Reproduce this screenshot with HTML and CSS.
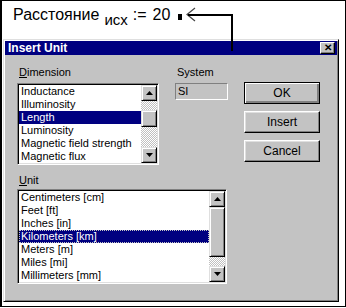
FILE: index.html
```html
<!DOCTYPE html>
<html lang="ru">
<head>
    <meta charset="UTF-8">
    <title>Insert Unit</title>
    <link rel="stylesheet" href="styles.css">
</head>
<body>
<div class="screen">

    <div class="formula">
        <span class="var">Расстояние</span>
        <span class="sub">исх</span>
        <span class="assign">:=</span>
        <span class="value">20</span>
        <span class="cursor"></span>
    </div>

    <!-- pointer from the placeholder down to the dialog -->
    <svg class="pointer" width="346" height="60" viewBox="0 0 346 60">
        <polyline points="194,7 186,13.5 194,20" fill="none" stroke="#444" stroke-width="1.2"/>
        <polyline points="187,14 231,14 231,50" fill="none" stroke="#000" stroke-width="2"/>
    </svg>

    <div class="dialog">
        <div class="titlebar">
            <span class="title">Insert Unit</span>
            <span class="close">&#x2715;</span>
        </div>

        <div class="dialog-body">
            <div class="top-row">
                <div class="group dim-group">
                    <div class="label"><u>D</u>imension</div>
                    <div class="listbox dim-list">
                        <ul class="items">
                            <li>Inductance</li>
                            <li>Illuminosity</li>
                            <li class="selected">Length</li>
                            <li>Luminosity</li>
                            <li>Magnetic field strength</li>
                            <li>Magnetic flux</li>
                        </ul>
                        <div class="scrollbar">
                            <div class="arrow up"><svg width="7" height="4" viewBox="0 0 7 4"><polygon points="3.5,0 7,4 0,4"/></svg></div>
                            <div class="track" style="height: 9px"></div>
                            <div class="thumb" style="height: 17px"></div>
                            <div class="track grow"></div>
                            <div class="arrow down"><svg width="7" height="4" viewBox="0 0 7 4"><polygon points="0,0 7,0 3.5,4"/></svg></div>
                        </div>
                    </div>
                </div>

                <div class="group sys-group">
                    <div class="label">System</div>
                    <div class="field">SI</div>
                </div>

                <div class="buttons">
                    <button class="btn default">OK</button>
                    <button class="btn">Insert</button>
                    <button class="btn">Cancel</button>
                </div>
            </div>

            <div class="group unit-group">
                <div class="label"><u>U</u>nit</div>
                <div class="listbox unit-list">
                    <ul class="items">
                        <li>Centimeters [cm]</li>
                        <li>Feet [ft]</li>
                        <li>Inches [in]</li>
                        <li class="selected focused">Kilometers [km]</li>
                        <li>Meters [m]</li>
                        <li>Miles [mi]</li>
                        <li>Millimeters [mm]</li>
                    </ul>
                    <div class="scrollbar">
                        <div class="arrow up"><svg width="7" height="4" viewBox="0 0 7 4"><polygon points="3.5,0 7,4 0,4"/></svg></div>
                        <div class="thumb" style="height: 50px"></div>
                        <div class="track grow"></div>
                        <div class="arrow down"><svg width="7" height="4" viewBox="0 0 7 4"><polygon points="0,0 7,0 3.5,4"/></svg></div>
                    </div>
                </div>
            </div>
        </div>
    </div>

</div>
</body>
</html>
```

FILE: styles.css
```css
body {
    margin: 0;
    background: #fff;
}

.screen {
    position: relative;
    width: 346px;
    height: 307px;
    box-sizing: border-box;
    border: 1px solid #000;
    border-left-width: 2px;
    background: #fff;
    overflow: hidden;
}

/* formula line above the dialog */
.formula {
    height: 38px;
    box-sizing: border-box;
    padding: 4px 0 0 11px;
    display: flex;
    align-items: baseline;
    font-family: "Liberation Sans", Arial, sans-serif;
    font-size: 16px;
    line-height: 20px;
    color: #000;
}

.sub {
    font-size: 15px;
    position: relative;
    top: 5px;
    margin-left: 5px;
}

.assign {
    margin-left: 5px;
}

.value {
    margin-left: 6px;
}

.cursor {
    display: inline-block;
    width: 4px;
    height: 6px;
    background: #000;
    margin-left: 8px;
}

.pointer {
    position: absolute;
    left: -1px;
    top: 0;
    z-index: 2;
}

/* dialog window */
.dialog {
    margin-left: 1px;
    width: 336px;
    height: 263px;
    box-sizing: border-box;
    border: 1px solid;
    border-color: #dfdfdf #000 #000 #dfdfdf;
    box-shadow: inset 1px 1px #fff, inset -1px -1px #808080;
    padding: 1px;
    background: #c3c3c3;
    font-family: "Liberation Sans", Arial, sans-serif;
    font-size: 11px;
    color: #000;
}

.titlebar {
    height: 14px;
    background: #000080;
    display: flex;
    align-items: center;
    justify-content: space-between;
    padding: 0 2px 0 3px;
}

.title {
    color: #fff;
    font-weight: bold;
    font-size: 12px;
}

.close {
    width: 15px;
    height: 12px;
    box-sizing: border-box;
    background: #c3c3c3;
    border: 1px solid;
    border-color: #fff #000 #000 #fff;
    box-shadow: inset -1px -1px #808080;
    font-size: 10px;
    font-weight: bold;
    line-height: 10px;
    text-align: center;
}

.dialog-body {
    padding: 11px 0 0 12px;
}

.top-row {
    display: grid;
    grid-template-columns: 142px 53px 76px;
    column-gap: 16px;
}

.label {
    height: 13px;
    line-height: 13px;
    margin-bottom: 4px;
    padding-left: 2px;
}

/* sunken list boxes */
.listbox {
    display: flex;
    box-sizing: border-box;
    border: 1px solid;
    border-color: #808080 #fff #fff #808080;
    box-shadow: inset 1px 1px #000, inset -1px -1px #dfdfdf;
    padding: 1px;
    background: #fff;
}

.dim-list {
    width: 142px;
    height: 82px;
}

.unit-group {
    margin-top: 9px;
}

.unit-group .label {
    margin-bottom: 2px;
}

.unit-list {
    width: 210px;
    height: 95px;
}

.items {
    list-style: none;
    margin: 0;
    padding: 0;
    flex: 1;
    overflow: hidden;
}

.items li {
    height: 13px;
    line-height: 13px;
    padding-left: 2px;
    white-space: nowrap;
}

.items li.selected {
    background: #000080;
    color: #fff;
}

.items li.focused {
    outline: 1px dotted #c3c3c3;
    outline-offset: -1px;
}

.scrollbar {
    width: 16px;
    display: flex;
    flex-direction: column;
}

.track {
    background: repeating-conic-gradient(#c0c0c0 0 25%, #fff 0 50%) 0 0 / 2px 2px;
}

.track.grow {
    flex: 1;
}

.arrow,
.thumb {
    box-sizing: border-box;
    background: #c3c3c3;
    border: 1px solid;
    border-color: #dfdfdf #000 #000 #dfdfdf;
    box-shadow: inset 1px 1px #fff, inset -1px -1px #808080;
}

.arrow {
    height: 16px;
    display: flex;
    align-items: center;
    justify-content: center;
}

.arrow svg {
    fill: #000;
}

/* read-only system field */
.field {
    height: 17px;
    box-sizing: border-box;
    border: 1px solid;
    border-color: #808080 #fff #fff #808080;
    padding-left: 2px;
    line-height: 15px;
}

.buttons {
    display: flex;
    flex-direction: column;
    gap: 7px;
    padding-top: 16px;
}

.btn {
    width: 76px;
    height: 22px;
    box-sizing: border-box;
    background: #c3c3c3;
    border: 1px solid;
    border-color: #fff #000 #000 #fff;
    box-shadow: inset -1px -1px #808080, inset 1px 1px #dfdfdf;
    font-family: "Liberation Sans", Arial, sans-serif;
    font-size: 12px;
    color: #000;
    padding: 0;
}

.btn.default {
    border-color: #000;
    box-shadow: inset 1px 1px #fff, inset -2px -2px #808080;
}
```
